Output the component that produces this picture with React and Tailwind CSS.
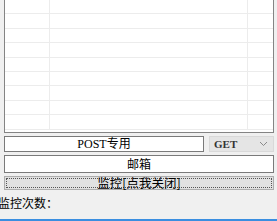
import React from "react";

const rows = Array.from({ length: 9 });

export default function App() {
    return (
        <div className="w-[277px] h-[221px] bg-[#f0f0f0] overflow-hidden flex flex-col font-['Liberation_Serif','Noto_Sans_CJK_SC',serif] text-[12px] text-black">
            {/* List */}
            <div className="ml-[4px] w-[270px] h-[133px] bg-white border-x border-b border-[#848484] overflow-hidden">
                {rows.map((_, i) => (
                    <div
                        key={i}
                        className="grid grid-cols-[45px_198px_1fr] h-[14.4px] border-b border-[#ececec]"
                    >
                        <div className="border-r border-[#ececec]" />
                        <div className="border-r border-[#ececec]" />
                        <div />
                    </div>
                ))}
            </div>

            {/* POST + method */}
            <div className="ml-[4px] w-[270px] mt-[3px] flex gap-[5px] h-[16px]">
                <div className="flex-1 bg-white border border-[#7a7a7a] flex items-center justify-center leading-none">
                    POST专用
                </div>
                <div className="w-[65px] bg-[#e5e5e5] border border-[#d9d9d9] flex items-center justify-between pl-[4px] pr-[5px] leading-none">
                    <span className="font-bold text-[11px] text-[#333]">GET</span>
                    <svg width="9" height="6" viewBox="0 0 9 6" fill="none">
                        <path d="M1 1l3.5 3.5L8 1" stroke="#8a8a8a" strokeWidth="1" />
                    </svg>
                </div>
            </div>

            {/* Mail */}
            <div className="ml-[4px] w-[270px] mt-[3px] h-[18px] bg-white border border-[#7a7a7a] flex items-center justify-center leading-none font-['Noto_Sans_CJK_SC',sans-serif]">
                邮箱
            </div>

            {/* Monitor button */}
            <button className="ml-[4px] w-[270px] mt-[3px] h-[14px] bg-[#e1e1e1] border border-[#adadad] p-[1px] flex">
                <div className="flex-1 border border-dotted border-[#555] flex items-center justify-center leading-none font-['Noto_Sans_CJK_SC',sans-serif] text-[12.5px]">
                    监控[点我关闭]
                </div>
            </button>

            {/* Counter */}
            <div className="mt-[5px] ml-[-2px] h-[16px] flex items-center leading-none font-['Noto_Sans_CJK_SC',sans-serif] text-[12px]">
                监控次数：
            </div>

            <div className="mt-auto h-[2px] bg-[#3a8ee0]" />
        </div>
    );
}
